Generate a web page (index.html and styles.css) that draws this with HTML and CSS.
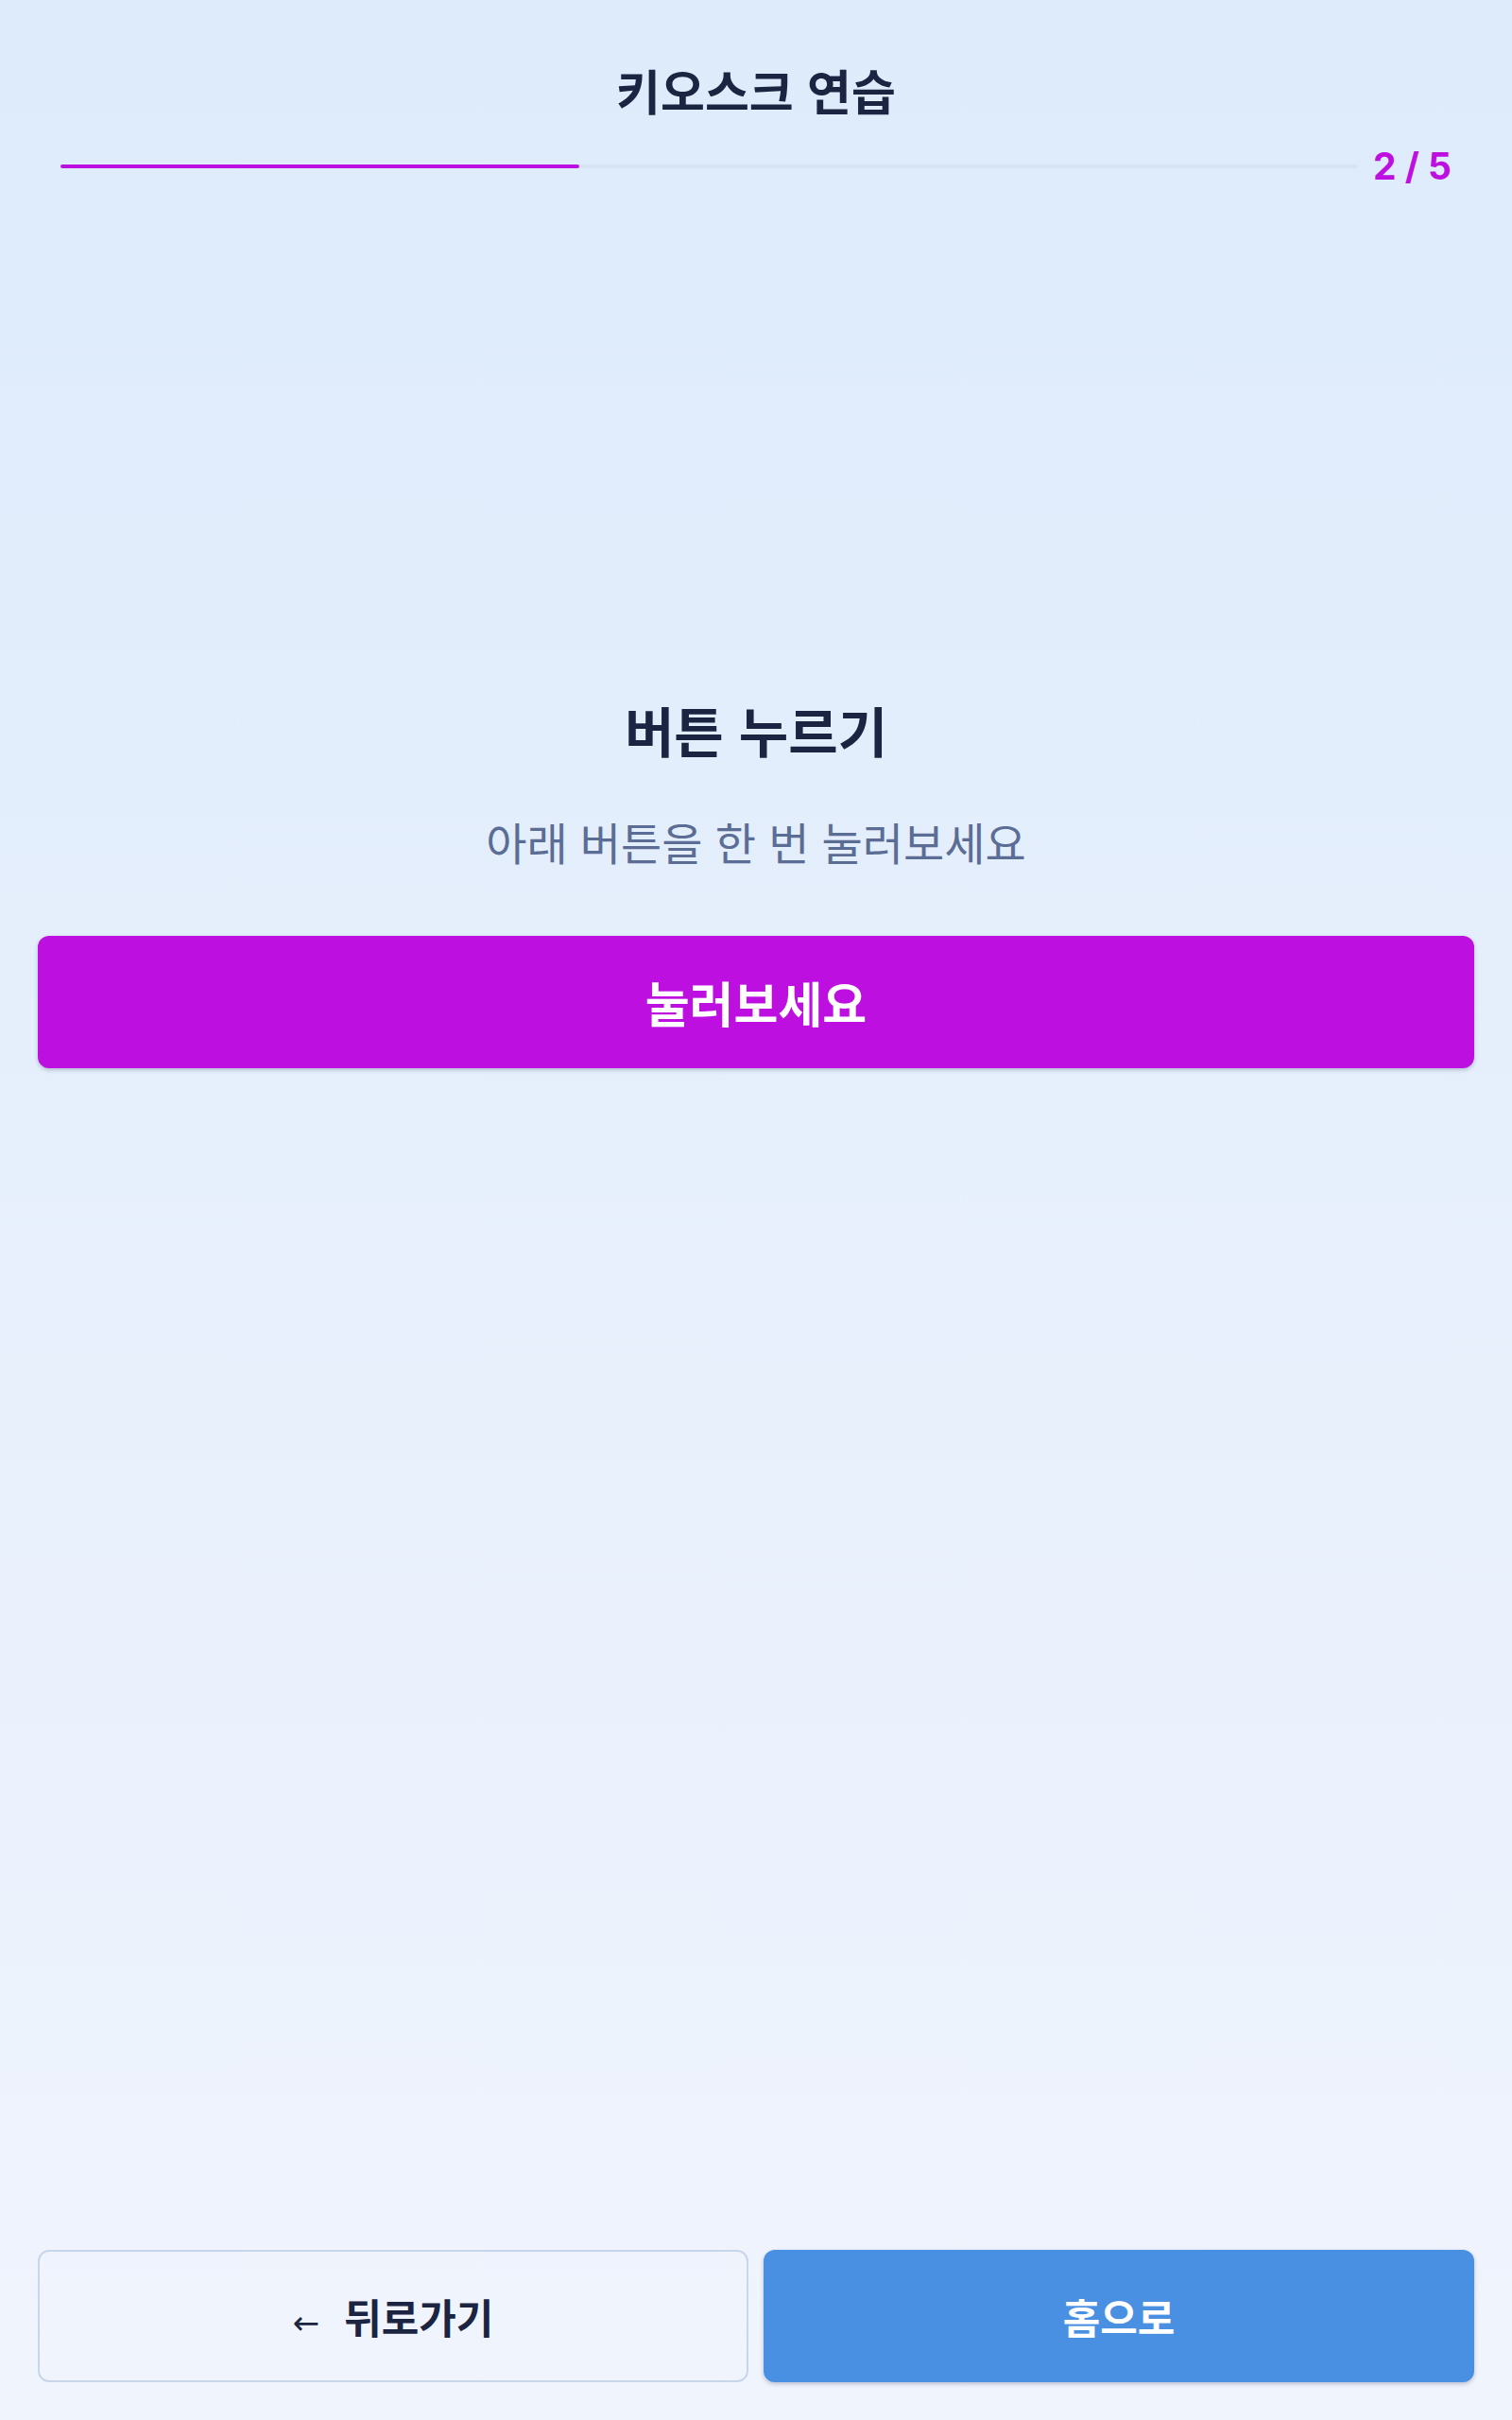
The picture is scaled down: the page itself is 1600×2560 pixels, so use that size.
FILE: index.html
```html
<!DOCTYPE html>
<html lang="ko">
<head>
    <meta charset="UTF-8">
    <meta name="viewport" content="width=device-width, initial-scale=1.0">
    <title>키오스크 연습</title>
<link rel="stylesheet" href="styles.css">
</head>
<body>

    <!-- Header -->
    <header class="practice-header">
        <h1 class="practice-title">키오스크 연습</h1>
        <div class="progress-row">
            <div class="progress-track">
                <div class="progress-fill" style="width: 40%"></div>
            </div>
            <span class="progress-count">2 / 5</span>
        </div>
    </header>

    <!-- Step content -->
    <main class="step">
        <h2 class="step-title">버튼 누르기</h2>
        <p class="step-desc">아래 버튼을 한 번 눌러보세요</p>
        <button class="btn btn-primary">눌러보세요</button>
    </main>

    <!-- Bottom nav -->
    <nav class="bottom-nav">
        <button class="btn btn-back"><span class="arrow">←</span> 뒤로가기</button>
        <button class="btn btn-home">홈으로</button>
    </nav>

</body>
</html>
```

FILE: styles.css
```css
    :root {
        --bg-top: #ddebfb;
        --bg-bottom: #f0f4fd;
        --text-primary: #1b2440;
        --text-muted: #5b6d94;
        --accent-color: #bd10e0;
        --home-color: #4a90e2;
        --border-color: #c8d5ea;
        --track-color: #d6e3f4;
    }

    * {
        box-sizing: border-box;
    }

    body {
        margin: 0;
        padding: 0;
        min-height: 100vh;
        background: linear-gradient(180deg, var(--bg-top) 0%, var(--bg-bottom) 100%);
        font-family: 'Noto Sans CJK KR', 'Noto Sans', sans-serif;
        color: var(--text-primary);
        display: flex;
        flex-direction: column;
    }

    /* Header */
    .practice-header {
        padding: 63px 64px 0;
    }

    .practice-title {
        margin: 0;
        text-align: center;
        font-size: 51px;
        font-weight: 700;
        line-height: 64px;
    }

    .progress-row {
        display: flex;
        align-items: center;
        gap: 16px;
        margin-top: 29px;
    }

    .progress-track {
        flex: 1;
        height: 4px;
        background: var(--track-color);
        border-radius: 2px;
    }

    .progress-fill {
        height: 100%;
        background: var(--accent-color);
        border-radius: 2px;
    }

    .progress-count {
        font-family: 'Inter', 'Roboto', sans-serif;
        font-size: 39px;
        font-weight: 700;
        color: var(--accent-color);
        line-height: 40px;
    }

    /* Step */
    .step {
        flex: 1;
        padding: 539px 40px 0;
        display: flex;
        flex-direction: column;
        align-items: center;
    }

    .step-title {
        margin: 0;
        font-size: 57px;
        font-weight: 700;
        line-height: 72px;
    }

    .step-desc {
        margin: 53px 0 0;
        font-size: 47px;
        font-weight: 400;
        line-height: 60px;
        color: var(--text-muted);
    }

    /* Buttons */
    .btn {
        font-family: 'Noto Sans CJK KR', 'Noto Sans', sans-serif;
        height: 140px;
        border-radius: 12px;
        border: none;
        cursor: pointer;
        font-weight: 700;
    }

    .btn-primary {
        width: 100%;
        margin-top: 70px;
        background: var(--accent-color);
        color: #fff;
        font-size: 51px;
        box-shadow: 0 2px 4px rgba(60, 70, 110, 0.3);
    }

    .bottom-nav {
        display: grid;
        grid-template-columns: 1fr 1fr;
        gap: 16px;
        padding: 0 40px 40px;
    }

    .btn-back {
        background: transparent;
        border: 2px solid var(--border-color);
        color: var(--text-primary);
        font-size: 43px;
    }

    .btn-back .arrow {
        font-family: 'DejaVu Sans', sans-serif;
        font-weight: 400;
        font-size: 34px;
        margin-right: 14px;
    }

    .btn-home {
        background: var(--home-color);
        color: #fff;
        font-size: 43px;
        box-shadow: 0 2px 4px rgba(60, 70, 110, 0.3);
    }
```
